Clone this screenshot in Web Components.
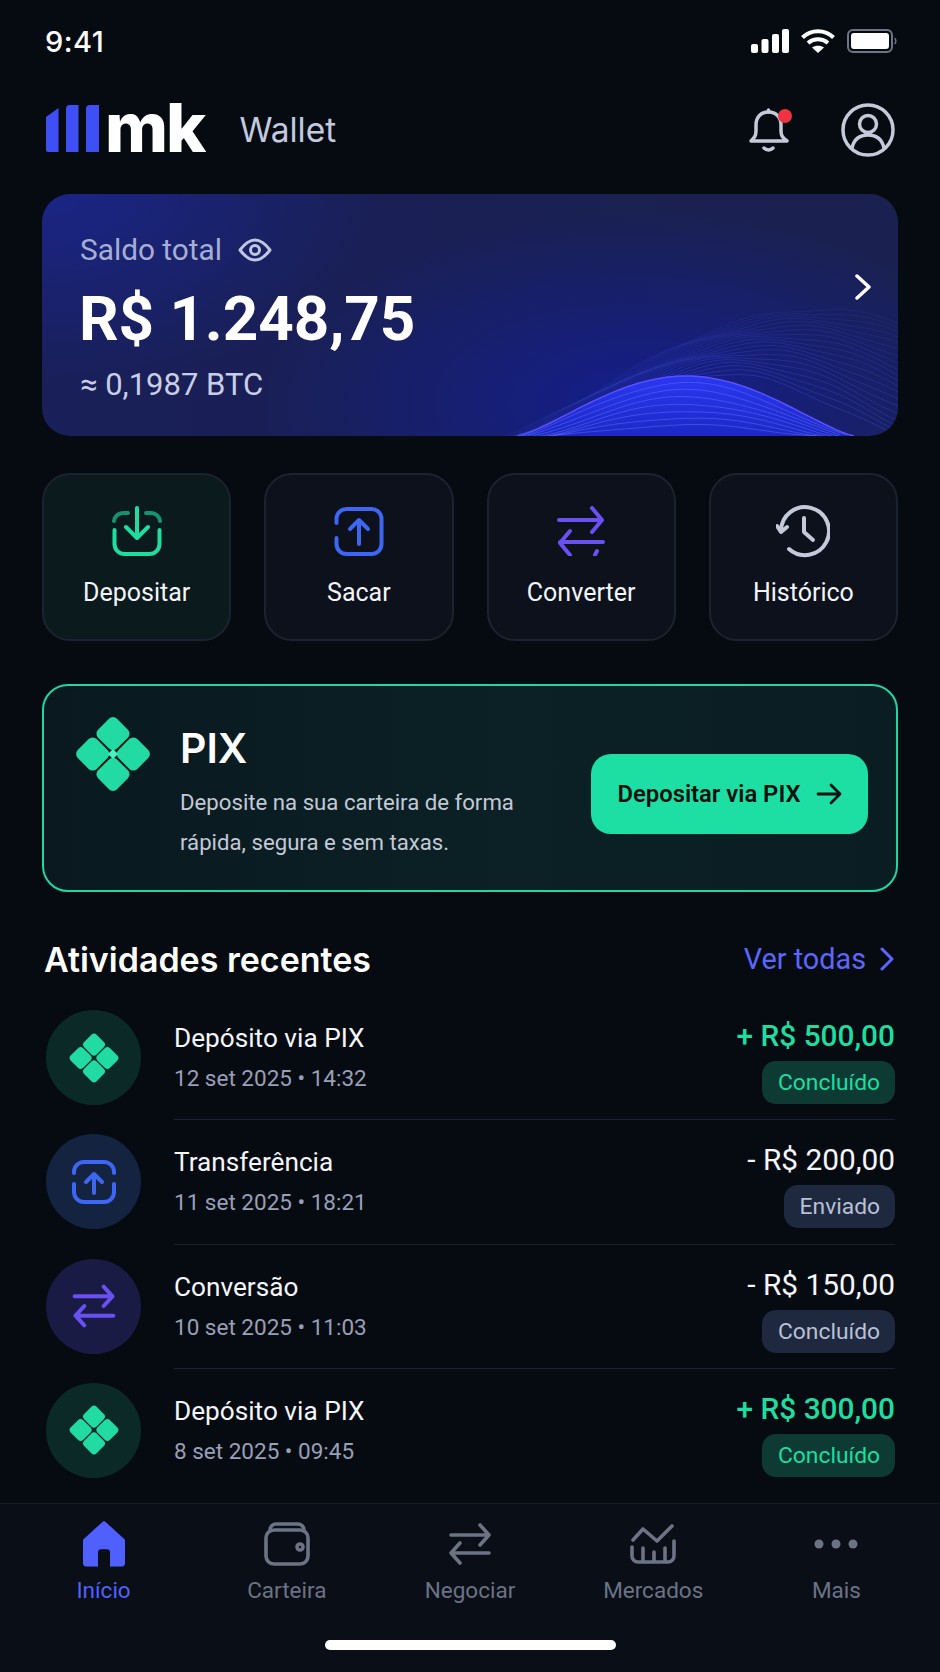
<!DOCTYPE html>
<html lang="pt-BR">
<head>
<meta charset="utf-8">
<title>mk Wallet</title>
<style>
    html, body {
        margin: 0;
        background: #060a11;
    }
</style>
</head>
<body>
<wallet-app>
    <status-bar></status-bar>
    <app-header></app-header>
    <balance-card></balance-card>
    <action-row>
        <action-tile tint="green" icon="deposit">Depositar</action-tile>
        <action-tile icon="withdraw">Sacar</action-tile>
        <action-tile icon="convert">Converter</action-tile>
        <action-tile icon="history">Histórico</action-tile>
    </action-row>
    <pix-banner></pix-banner>
    <section-head></section-head>
    <activity-list>
        <activity-row kind="pix" tone="in" pill="green" name="Depósito via PIX" date="12 set 2025 • 14:32" amount="+ R$ 500,00" status="Concluído"></activity-row>
        <activity-row kind="send" pill="grey" name="Transferência" date="11 set 2025 • 18:21" amount="- R$ 200,00" status="Enviado"></activity-row>
        <activity-row kind="swap" pill="grey" name="Conversão" date="10 set 2025 • 11:03" amount="- R$ 150,00" status="Concluído"></activity-row>
        <activity-row kind="pix" tone="in" pill="green" last name="Depósito via PIX" date="8 set 2025 • 09:45" amount="+ R$ 300,00" status="Concluído"></activity-row>
    </activity-list>
    <bottom-nav>
        <nav-item active icon="home">Início</nav-item>
        <nav-item icon="wallet">Carteira</nav-item>
        <nav-item icon="trade">Negociar</nav-item>
        <nav-item icon="market">Mercados</nav-item>
        <nav-item icon="more">Mais</nav-item>
    </bottom-nav>
</wallet-app>

<script>
const ICONS = {
    deposit: `<svg width="50" height="50" viewBox="0 0 50 50" fill="none" stroke-linecap="round" stroke-linejoin="round">
        <path d="M2 15a9 9 0 0 1 9-8h5M34 7h5a9 9 0 0 1 9 8" stroke="#15936f" stroke-width="4"/>
        <path d="M2.5 24v14a10 10 0 0 0 10 10h25a10 10 0 0 0 10-10V24" stroke="#1fdda0" stroke-width="4"/>
        <path d="M25 2v29M14 21l11 11 11-11" stroke="#1fdda0" stroke-width="4"/></svg>`,
    withdraw: `<svg width="50" height="50" viewBox="0 0 50 50" fill="none" stroke="#3d67f2" stroke-width="4" stroke-linecap="round" stroke-linejoin="round">
        <path d="M2.5 17v-4a10 10 0 0 1 10-10h25a10 10 0 0 1 10 10v25a10 10 0 0 1-10 10h-25a10 10 0 0 1-10-10v-6"/>
        <path d="M25 38V14M16 23l9-9 9 9"/></svg>`,
    convert: `<svg width="50" height="50" viewBox="0 0 50 50" fill="none" stroke="#6a4ff2" stroke-width="4" stroke-linecap="round" stroke-linejoin="round">
        <path d="M3 14h43M36 2l10 12-10 12"/>
        <path d="M47 36H4M14 25L4 37l10 12M39 49l2-4"/></svg>`,
    history: `<svg width="54" height="54" viewBox="0 0 54 54" fill="none" stroke="#c5cadb" stroke-width="4" stroke-linecap="round" stroke-linejoin="round">
        <path d="M5 27A24 24 0 1 1 13 45"/>
        <path d="M1 22l4 6 6-5"/>
        <path d="M28 14v14l9 8"/></svg>`,
    home: `<svg width="44" height="46" viewBox="0 0 44 44" preserveAspectRatio="none"><path fill="#5060ff" d="M21 0.500 Q22 0 23 0.500 L42 17 Q43 18 43 19 V40.500 a3 3 0 0 1-3 3 H28 V30 a3 3 0 0 0-3-3 h-6 a3 3 0 0 0-3 3 V43.500 H4 a3 3 0 0 1-3-3 V19 Q1 18 2 17 Z"/></svg>`,
    wallet: `<svg width="46" height="44" viewBox="0 0 46 44" fill="none" stroke="#6b7385" stroke-width="3.600" stroke-linecap="round" stroke-linejoin="round">
        <rect x="2" y="8" width="42" height="34" rx="8"/>
        <path d="M6 9V8a6 6 0 0 1 6-6h22a6 6 0 0 1 6 6v1"/>
        <circle cx="36" cy="25" r="3" /></svg>`,
    trade: `<svg width="44" height="42" viewBox="0 0 44 42" fill="none" stroke="#6b7385" stroke-width="3.600" stroke-linecap="round" stroke-linejoin="round">
        <path d="M3 12h38M32 2l9 10-9 10"/>
        <path d="M41 30H3M12 20 3 30l9 10"/></svg>`,
    market: `<svg width="46" height="40" viewBox="0 0 46 40" fill="none" stroke="#6b7385" stroke-width="3.600" stroke-linecap="round" stroke-linejoin="round">
        <path d="M3 16 13 5l14 12L42 2"/>
        <path d="M2 23v9a6 6 0 0 0 6 6h30a6 6 0 0 0 6-6V17M13 24v14M24 28v10M35 24v14"/></svg>`,
    more: `<svg width="44" height="44" viewBox="0 0 44 44" fill="#6b7385"><circle cx="5" cy="22" r="4.500"/><circle cx="22" cy="22" r="4.500"/><circle cx="39" cy="22" r="4.500"/></svg>`
};

// four rounded squares on a turned 2x2 grid
function pixMark(size, colour, hole) {
    return `<svg width="${size}" height="${size}" viewBox="0 0 74 74">
        <g transform="rotate(45 37 37)" fill="${colour}">
            <rect x="10" y="10" width="26" height="26" rx="5.500"/>
            <rect x="38" y="10" width="26" height="26" rx="5.500"/>
            <rect x="10" y="38" width="26" height="26" rx="5.500"/>
            <rect x="38" y="38" width="26" height="26" rx="5.500"/>
            ${hole ? `<rect x="33.500" y="33.500" width="7" height="7" rx="1" fill="${hole}"/>` : ""}
        </g></svg>`;
}

class WalletApp extends HTMLElement {
    constructor() {
        super();
        this.shadowDOM = this.attachShadow({mode: "open"});
    }
    connectedCallback() {
        this.shadowDOM.innerHTML = `
        <style>
            :host {
                display: flex;
                flex-direction: column;
                width: 940px;
                height: 1672px;
                overflow: hidden;
                background: #060a11;
                color: #fff;
                font-family: Roboto, "Liberation Sans", sans-serif;
            }
        </style>
        <slot></slot>`;
    }
}

class StatusBar extends HTMLElement {
    constructor() {
        super();
        this.shadowDOM = this.attachShadow({mode: "open"});
    }
    connectedCallback() {
        this.shadowDOM.innerHTML = `
        <style>
            :host {
                display: flex;
                align-items: center;
                justify-content: space-between;
                height: 82px;
                padding: 0 43px 0 45px;
                flex: none;
            }
            .time {
                font-family: Inter, sans-serif;
                font-size: 29px;
                font-weight: 500;
                letter-spacing: .5px;
            }
            .icons {
                display: flex;
                align-items: center;
                gap: 12px;
            }
            svg { display: block; }
        </style>
        <span class="time">9:41</span>
        <div class="icons">
            <svg width="38" height="24" viewBox="0 0 38 24" fill="#fff">
                <rect x="0" y="15" width="7" height="9" rx="2"/>
                <rect x="10.500" y="10" width="7" height="14" rx="2"/>
                <rect x="21" y="5" width="7" height="19" rx="2"/>
                <rect x="31" y="0" width="7" height="24" rx="2"/>
            </svg>
            <svg width="34" height="24" viewBox="0 0 34 24" fill="none" stroke="#fff" stroke-width="4">
                <path d="M1.500 8.500C10 0 24 0 32.500 8.500"/>
                <path d="M7 14c6-5 14-5 20 0"/>
                <path d="M17 24l-6-5.500c3.500-2.500 8.500-2.500 12 0Z" fill="#fff" stroke="none"/>
            </svg>
            <svg width="50" height="24" viewBox="0 0 50 24" fill="none">
                <rect x="1" y="1" width="44" height="22" rx="5" stroke="#6f7586" stroke-width="2"/>
                <rect x="4" y="4" width="38" height="16" rx="3" fill="#fff"/>
                <path d="M47.500 9a4 4 0 0 1 0 6" stroke="#6f7586" stroke-width="1.500"/>
            </svg>
        </div>`;
    }
}

class AppHeader extends HTMLElement {
    constructor() {
        super();
        this.shadowDOM = this.attachShadow({mode: "open"});
    }
    connectedCallback() {
        this.shadowDOM.innerHTML = `
        <style>
            :host {
                display: flex;
                align-items: center;
                height: 96px;
                padding: 0 45px 0 46px;
                flex: none;
            }
            .bars { margin-top: -4px; }
            .mk {
                font-family: Inter, sans-serif;
                font-size: 68px;
                font-weight: 800;
                letter-spacing: -2px;
                line-height: 60px;
                margin-left: 6px;
                margin-top: -6px;
            }
            .name {
                font-size: 33.500px;
                font-family: Inter, sans-serif;
                color: #c3c9df;
                margin-left: 35px;
            }
            .tools {
                display: flex;
                align-items: center;
                margin-left: auto;
                gap: 52px;
            }
            .bell { position: relative; }
            .dot {
                position: absolute;
                top: 1px;
                right: -3px;
                width: 14px;
                height: 14px;
                background: #ef3340;
                border-radius: 50%;
            }
            svg { display: block; }
        </style>
        <svg class="bars" width="53" height="48" viewBox="0 0 53 48" fill="#3f4ff6">
            <path d="M0 13 12.500 4V48H2a2 2 0 0 1-2-2Z"/>
            <path d="M20 5a4 4 0 0 1 4-4h8.500V48H20Z"/>
            <path d="M40 5a4 4 0 0 1 4-4h9V48H40Z"/>
        </svg>
        <span class="mk">mk</span>
        <span class="name">Wallet</span>
        <div class="tools">
            <div class="bell">
                <svg width="40" height="44" viewBox="0 0 40 44" fill="none" stroke="#c5cadb" stroke-width="3.500" stroke-linecap="round" stroke-linejoin="round">
                    <path d="M2 33c3-3 5-5 5-10v-6C7 9 12 4 19.500 4S32 9 32 17v6c0 5 2 7 6 10Z"/>
                    <path d="M19.500 4V2M15 40c2.500 2.500 6.500 2.500 9 0"/>
                </svg>
                <span class="dot"></span>
            </div>
            <svg width="54" height="54" viewBox="0 0 54 54" fill="none" stroke="#c5cadb" stroke-width="3.500">
                <circle cx="27" cy="27" r="25"/>
                <circle cx="27" cy="21" r="8.500"/>
                <path d="M11 45c2-9 8-13 16-13s14 4 16 13"/>
            </svg>
        </div>`;
    }
}

class BalanceCard extends HTMLElement {
    constructor() {
        super();
        this.shadowDOM = this.attachShadow({mode: "open"});
    }

    hump(x, centre, width, height) {
        const d = Math.abs(x - centre) / width;
        if (d >= 1) return 0;
        return height * Math.pow(Math.cos(d * Math.PI / 2), 1.25);
    }

    // only the stretch of x where the curve stands clear of the card's bottom edge
    line(from, to, fn) {
        let d = "";
        for (let x = from; x <= to; x += 6) {
            d += (d ? "L" : "M") + x + " " + fn(x).toFixed(1);
        }
        return d;
    }

    waves() {
        let out = "";
        // faint contour lines around the hill
        for (let k = 0; k < 20; k++) {
            const h = 62 + k * 3.4;
            const w = 180 + k * 7;
            const c = 680 + k * 5;
            const d = this.line(c - w, c + w, x => 242 - this.hump(x, c, w, h) + Math.sin(x / 17 + k * .7) * 1.6);
            out += `<path d="${d}" stroke="#4f60ff" stroke-opacity="${(.28 - k * .009).toFixed(2)}" stroke-width="1" fill="none"/>`;
        }
        // the hill itself
        const hill = this.line(476, 812, x => 242 - this.hump(x, 644, 168, 60));
        out += `<path d="${hill}V250H476Z" fill="url(#hill)"/>`;
        out += `<path d="${hill}" stroke="#5a50ff" stroke-width="1.500" fill="none"/>`;
        for (let k = 1; k < 8; k++) {
            const w = 168 - k * 5;
            const d = this.line(644 - w, 644 + w, x => 242 - this.hump(x, 644, w, 60 - k * 7) + Math.sin(x / 23 + k) * .8);
            out += `<path d="${d}" stroke="#6d80ff" stroke-opacity=".4" stroke-width="1" fill="none"/>`;
        }
        return out;
    }

    connectedCallback() {
        this.shadowDOM.innerHTML = `
        <style>
            :host {
                display: block;
                position: relative;
                height: 242px;
                margin: 16px 42px 0;
                border-radius: 28px;
                overflow: hidden;
                flex: none;
                background:
                    radial-gradient(380px 190px at 600px 210px, #141e8c 0%, rgba(20, 30, 140, 0) 100%),
                    radial-gradient(340px 190px at 0 0, #1a2586 0%, rgba(26, 37, 134, 0) 100%),
                    linear-gradient(90deg, #191f58, #1a2150);
            }
            .art {
                position: absolute;
                inset: 0;
            }
            .body {
                position: relative;
                padding: 34px 38px 0;
            }
            .label {
                display: flex;
                align-items: center;
                gap: 16px;
                font-size: 29.800px;
                line-height: 44px;
                color: #a7aed4;
            }
            .total {
                font-size: 62px;
                font-weight: 700;
                line-height: 70px;
                margin-top: 12px;
                margin-left: -1px;
                letter-spacing: -.1px;
            }
            .btc {
                font-size: 31px;
                line-height: 40px;
                color: #c9cee6;
                margin-top: 11px;
            }
            .go {
                position: absolute;
                right: 26px;
                top: 80px;
            }
            svg { display: block; }
        </style>
        <svg class="art" width="856" height="242" viewBox="0 0 856 242">
            <defs>
                <linearGradient id="hill" x1="0" y1="0" x2="0" y2="1">
                    <stop offset="0" stop-color="#2a37f2"/>
                    <stop offset="1" stop-color="#1a27c0"/>
                </linearGradient>
            </defs>
            ${this.waves()}
        </svg>
        <div class="body">
            <div class="label">Saldo total
                <svg width="34" height="24" viewBox="0 0 34 24" fill="none" stroke="#c0c6e2" stroke-width="3" stroke-linejoin="round">
                    <path d="M2 12C8 4 12 2 17 2s9 2 15 10c-6 8-10 10-15 10S8 20 2 12Z"/>
                    <circle cx="17" cy="12" r="4.500"/>
                </svg>
            </div>
            <div class="total">R$ 1.248,75</div>
            <div class="btc">≈ 0,1987 BTC</div>
        </div>
        <svg class="go" width="18" height="26" viewBox="0 0 18 26" fill="none" stroke="#fff" stroke-width="3.500" stroke-linecap="round" stroke-linejoin="round"><path d="M3 2l12 11L3 24"/></svg>`;
    }
}

class ActionRow extends HTMLElement {
    constructor() {
        super();
        this.shadowDOM = this.attachShadow({mode: "open"});
    }
    connectedCallback() {
        this.shadowDOM.innerHTML = `
        <style>
            :host {
                display: grid;
                grid-template-columns: repeat(4, 1fr);
                gap: 33px;
                height: 168px;
                margin: 37px 42px 0;
                flex: none;
            }
        </style>
        <slot></slot>`;
    }
}

class ActionTile extends HTMLElement {
    constructor() {
        super();
        this.shadowDOM = this.attachShadow({mode: "open"});
    }
    connectedCallback() {
        const green = this.getAttribute("tint") === "green";
        this.shadowDOM.innerHTML = `
        <style>
            :host {
                display: flex;
                flex-direction: column;
                align-items: center;
                box-sizing: border-box;
                border: 2px solid #1c2330;
                border-radius: 28px;
                background: ${green ? "#0a1a1d" : "#0c111c"};
                padding-top: 29px;
            }
            .icon {
                height: 54px;
                display: flex;
                align-items: center;
            }
            .text {
                font-size: 25px;
                line-height: 32px;
                margin-top: 19px;
                color: #f3f5fa;
            }
            svg { display: block; }
        </style>
        <div class="icon">${ICONS[this.getAttribute("icon")]}</div>
        <div class="text"><slot></slot></div>`;
    }
}

class PixBanner extends HTMLElement {
    constructor() {
        super();
        this.shadowDOM = this.attachShadow({mode: "open"});
    }
    connectedCallback() {
        this.shadowDOM.innerHTML = `
        <style>
            :host {
                display: flex;
                box-sizing: border-box;
                height: 208px;
                margin: 43px 42px 0;
                padding: 30px 28px 0 31px;
                border: 2px solid #22d6a0;
                border-radius: 26px;
                background: linear-gradient(90deg, #09191f, #0b2125 55%, #0a1d22);
                flex: none;
            }
            .mark { flex: none; width: 74px; }
            .copy { margin-left: 31px; width: 380px; padding-top: 7px; }
            h3 {
                margin: 0;
                font-family: Inter, sans-serif;
                font-size: 41px;
                font-weight: 600;
                line-height: 50px;
            }
            p {
                margin: 10px 0 0;
                font-size: 22.200px;
                line-height: 39.500px;
                color: #c3c9d6;
            }
            .cta {
                display: flex;
                align-items: center;
                justify-content: center;
                gap: 15px;
                width: 277px;
                height: 80px;
                margin: 38px 0 0 auto;
                background: #1ddfa3;
                color: #06120f;
                border-radius: 20px;
                font-size: 23.800px;
                font-weight: 600;
            }
            svg { display: block; }
        </style>
        <div class="mark">${pixMark(76, "#22dba2", "#4ff0c0")}</div>
        <div class="copy">
            <h3>PIX</h3>
            <p>Deposite na sua carteira de forma<br>rápida, segura e sem taxas.</p>
        </div>
        <div class="cta">Depositar via PIX
            <svg width="26" height="22" viewBox="0 0 26 22" fill="none" stroke="#06120f" stroke-width="2.800" stroke-linecap="round" stroke-linejoin="round"><path d="M2 11h22M15 2l9 9-9 9"/></svg>
        </div>`;
    }
}

class SectionHead extends HTMLElement {
    constructor() {
        super();
        this.shadowDOM = this.attachShadow({mode: "open"});
    }
    connectedCallback() {
        this.shadowDOM.innerHTML = `
        <style>
            :host {
                display: flex;
                align-items: center;
                justify-content: space-between;
                height: 60px;
                margin: 37px 46px 0 44px;
                flex: none;
            }
            h2 {
                margin: 0;
                font-family: Inter, sans-serif;
                font-size: 34px;
                font-weight: 600;
            }
            .all {
                display: flex;
                align-items: center;
                gap: 14px;
                font-size: 28.800px;
                color: #5b66ff;
            }
            svg { display: block; }
        </style>
        <h2>Atividades recentes</h2>
        <div class="all">Ver todas
            <svg width="14" height="24" viewBox="0 0 14 24" fill="none" stroke="#5b66ff" stroke-width="3" stroke-linecap="round" stroke-linejoin="round"><path d="M2 2l10 10L2 22"/></svg>
        </div>`;
    }
}

class ActivityList extends HTMLElement {
    constructor() {
        super();
        this.shadowDOM = this.attachShadow({mode: "open"});
    }
    connectedCallback() {
        this.shadowDOM.innerHTML = `
        <style>
            :host {
                display: block;
                margin: 7px 45px 0 45px;
                flex: none;
            }
        </style>
        <slot></slot>`;
    }
}

class ActivityRow extends HTMLElement {
    constructor() {
        super();
        this.shadowDOM = this.attachShadow({mode: "open"});
    }

    avatar(kind) {
        if (kind === "pix") return pixMark(50, "#22dba2");
        if (kind === "send") {
            return `<svg width="44" height="44" viewBox="0 0 44 44" fill="none" stroke="#3d67f2" stroke-width="4" stroke-linecap="round" stroke-linejoin="round">
                <path d="M2 13v-1a10 10 0 0 1 10-10h20a10 10 0 0 1 10 10v1M2 24v8a10 10 0 0 0 10 10h20a10 10 0 0 0 10-10v-8"/>
                <path d="M22 33V14M14 22l8-8 8 8"/></svg>`;
        }
        return `<svg width="44" height="44" viewBox="0 0 50 50" fill="none" stroke="#6a4ff2" stroke-width="4.500" stroke-linecap="round" stroke-linejoin="round">
            <path d="M3 14h43M36 3l10 11-10 11"/>
            <path d="M47 36H4M14 25 4 36l10 11"/></svg>`;
    }

    connectedCallback() {
        const kind = this.getAttribute("kind");
        const disc = {pix: "#0b2a27", send: "#14233f", swap: "#1a1b45"}[kind];
        const green = this.getAttribute("pill") === "green";
        const rule = this.hasAttribute("last") ? "0" : "1px solid #1b212e";
        this.shadowDOM.innerHTML = `
        <style>
            :host {
                display: flex;
                height: 124.300px;
            }
            .disc {
                flex: none;
                display: flex;
                align-items: center;
                justify-content: center;
                width: 95px;
                height: 95px;
                margin: 14px 33px 0 1px;
                border-radius: 50%;
                background: ${disc};
            }
            .line {
                flex: 1;
                display: flex;
                justify-content: space-between;
                box-sizing: border-box;
                border-bottom: ${rule};
            }
            .name {
                font-size: 26.200px;
                line-height: 36px;
                margin-top: 24px;
                color: #f4f6fb;
            }
            .date {
                font-size: 22.500px;
                line-height: 36px;
                margin-top: 4px;
                color: #98a0b8;
            }
            .right {
                display: flex;
                flex-direction: column;
                align-items: flex-end;
                padding-top: 22px;
            }
            .amount {
                font-size: 29.800px;
                line-height: 36px;
                font-weight: ${green ? 500 : 400};
                color: ${green ? "#1fdda0" : "#f4f6fb"};
            }
            .pill {
                display: flex;
                align-items: center;
                height: 43px;
                margin-top: 7px;
                padding: 0 15px 0 16px;
                border-radius: 14px;
                font-size: 22.800px;
                background: ${green ? "#0d3b34" : "#1e2940"};
                color: ${green ? "#1fdda0" : "#b9c0d6"};
            }
            svg { display: block; }
        </style>
        <div class="disc">${this.avatar(kind)}</div>
        <div class="line">
            <div>
                <div class="name">${this.getAttribute("name")}</div>
                <div class="date">${this.getAttribute("date")}</div>
            </div>
            <div class="right">
                <div class="amount">${this.getAttribute("amount")}</div>
                <div class="pill">${this.getAttribute("status")}</div>
            </div>
        </div>`;
    }
}

class BottomNav extends HTMLElement {
    constructor() {
        super();
        this.shadowDOM = this.attachShadow({mode: "open"});
    }
    connectedCallback() {
        this.shadowDOM.innerHTML = `
        <style>
            :host {
                display: block;
                box-sizing: border-box;
                margin-top: auto;
                height: 169px;
                background: #0a0e17;
                border-top: 1px solid #161b26;
                flex: none;
            }
            .items {
                display: grid;
                grid-template-columns: repeat(5, 1fr);
                padding: 17px 12px 0;
            }
            .handle {
                width: 291px;
                height: 10px;
                margin: 36px auto 0;
                background: #fff;
                border-radius: 5px;
            }
        </style>
        <div class="items"><slot></slot></div>
        <div class="handle"></div>`;
    }
}

class NavItem extends HTMLElement {
    constructor() {
        super();
        this.shadowDOM = this.attachShadow({mode: "open"});
    }
    connectedCallback() {
        const active = this.hasAttribute("active");
        this.shadowDOM.innerHTML = `
        <style>
            :host {
                display: flex;
                flex-direction: column;
                align-items: center;
            }
            .icon {
                height: 46px;
                display: flex;
                align-items: center;
            }
            .text {
                font-size: 22.500px;
                line-height: 28px;
                margin-top: 9px;
                color: ${active ? "#5060ff" : "#6b7385"};
            }
            svg { display: block; }
        </style>
        <div class="icon">${ICONS[this.getAttribute("icon")]}</div>
        <div class="text"><slot></slot></div>`;
    }
}

customElements.define("wallet-app", WalletApp);
customElements.define("status-bar", StatusBar);
customElements.define("app-header", AppHeader);
customElements.define("balance-card", BalanceCard);
customElements.define("action-row", ActionRow);
customElements.define("action-tile", ActionTile);
customElements.define("pix-banner", PixBanner);
customElements.define("section-head", SectionHead);
customElements.define("activity-list", ActivityList);
customElements.define("activity-row", ActivityRow);
customElements.define("bottom-nav", BottomNav);
customElements.define("nav-item", NavItem);
</script>
</body>
</html>
